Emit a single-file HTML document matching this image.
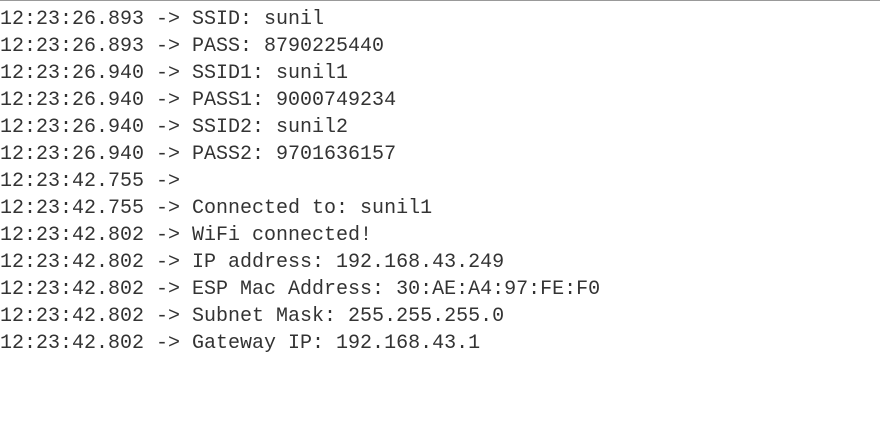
<!DOCTYPE html>
<html><head><meta charset="utf-8"><style>
html,body{margin:0;padding:0;background:#fff;width:880px;height:447px;overflow:hidden}
.top{height:1px;background:#999}
pre{margin:0;padding:5px 0 0 0;font-family:"Liberation Mono","Courier New",monospace;font-size:20px;line-height:27px;color:#333}
</style></head><body><div class="top"></div><pre>12:23:26.893 -&gt; SSID: sunil
12:23:26.893 -&gt; PASS: 8790225440
12:23:26.940 -&gt; SSID1: sunil1
12:23:26.940 -&gt; PASS1: 9000749234
12:23:26.940 -&gt; SSID2: sunil2
12:23:26.940 -&gt; PASS2: 9701636157
12:23:42.755 -&gt; 
12:23:42.755 -&gt; Connected to: sunil1
12:23:42.802 -&gt; WiFi connected!
12:23:42.802 -&gt; IP address: 192.168.43.249
12:23:42.802 -&gt; ESP Mac Address: 30:AE:A4:97:FE:F0
12:23:42.802 -&gt; Subnet Mask: 255.255.255.0
12:23:42.802 -&gt; Gateway IP: 192.168.43.1</pre></body></html>
